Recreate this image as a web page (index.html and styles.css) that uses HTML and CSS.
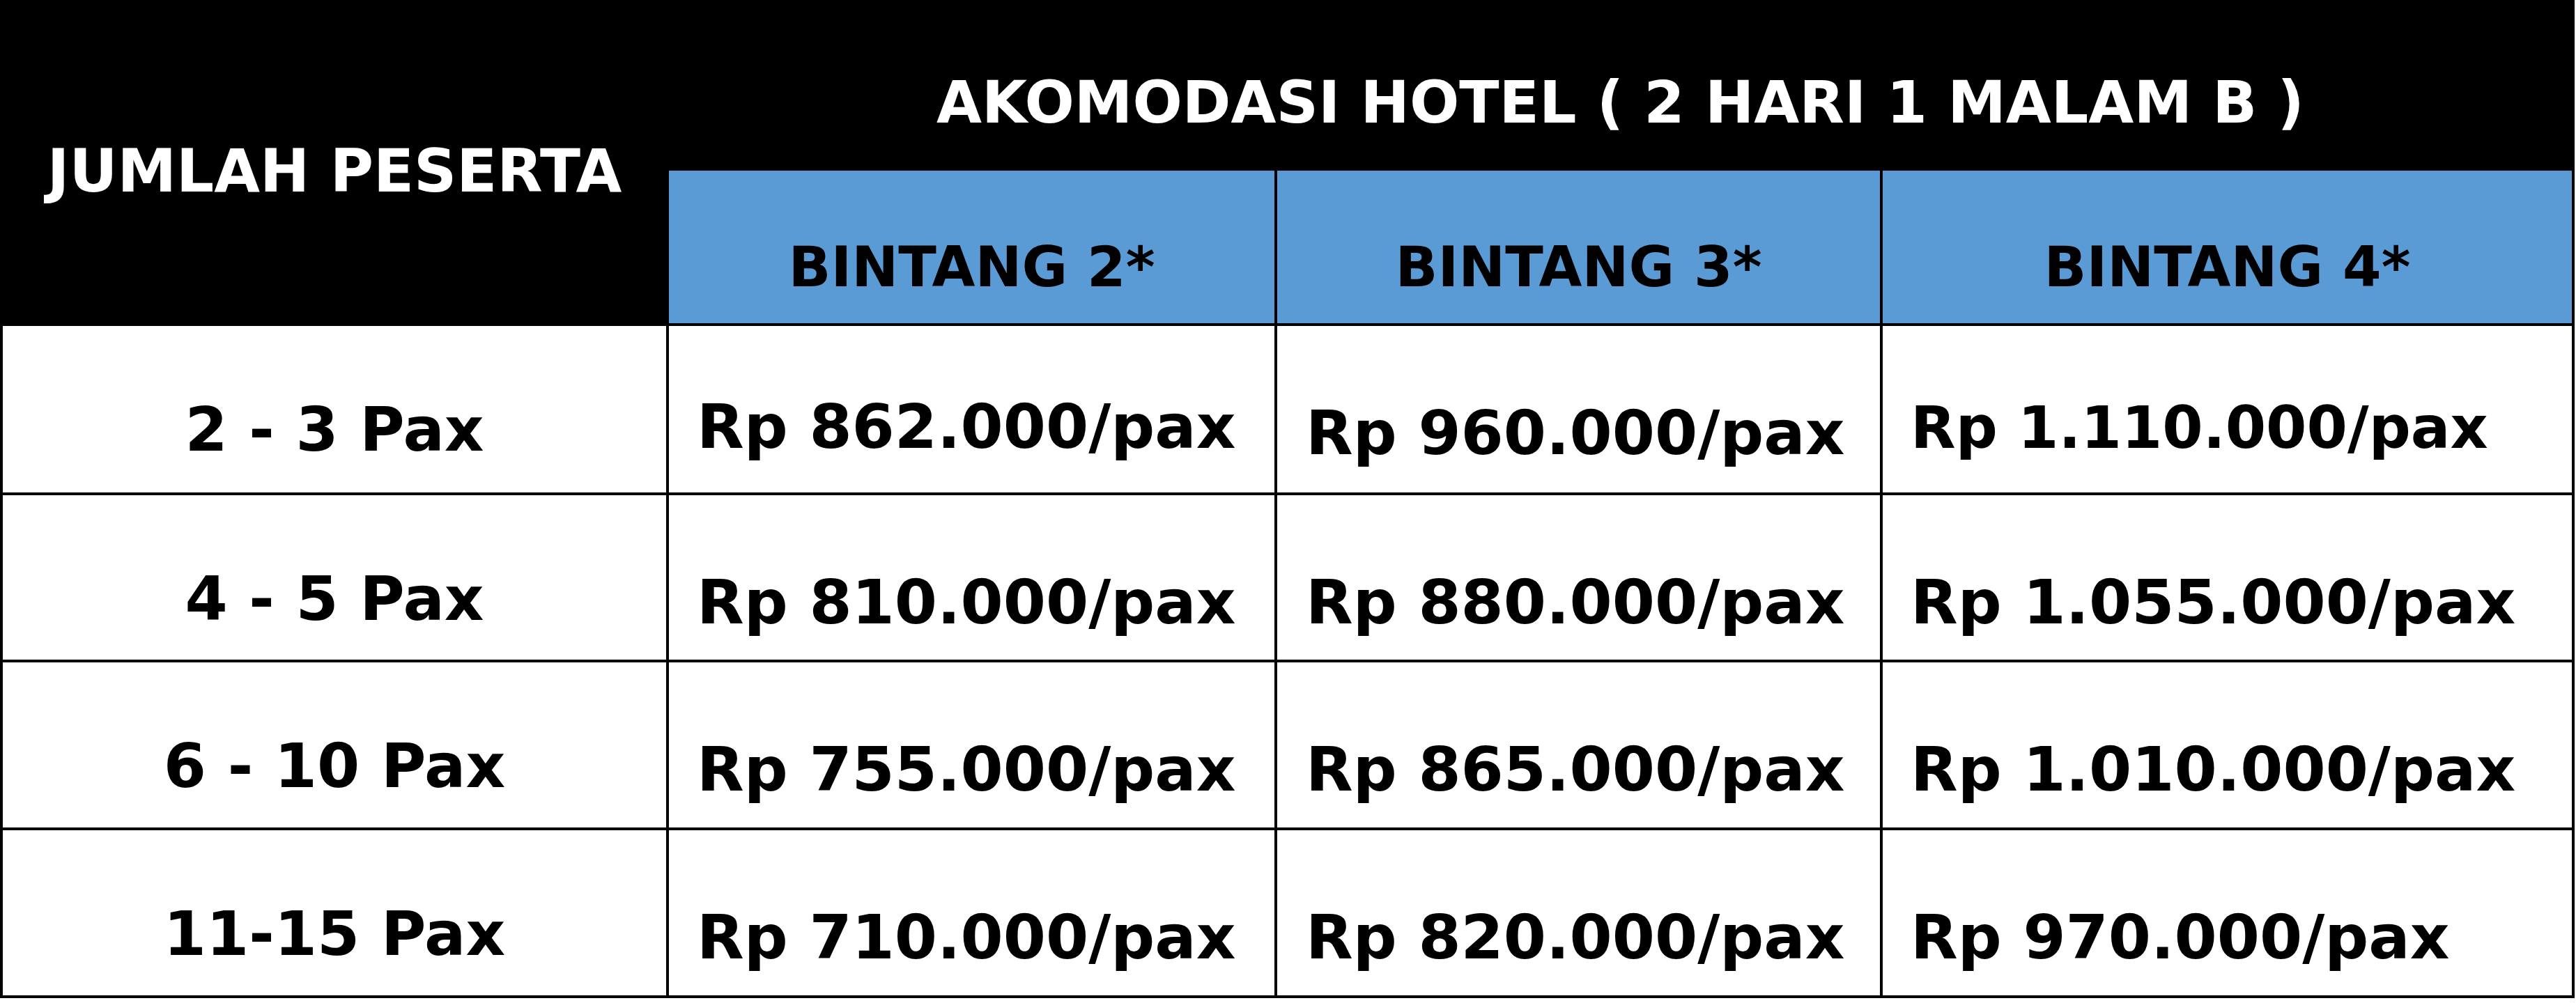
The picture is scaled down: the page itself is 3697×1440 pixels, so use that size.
FILE: index.html
```html
<!DOCTYPE html>
<html lang="id">
<head>
<meta charset="utf-8">
<title>Akomodasi Hotel</title>
<link rel="stylesheet" href="styles.css">
</head>
<body>
<div class="sheet">
  <div class="cell head-main">JUMLAH PESERTA</div>
  <div class="cell head-top">AKOMODASI HOTEL ( 2 HARI 1 MALAM B )</div>
  <div class="cell star">BINTANG 2*</div>
  <div class="cell star">BINTANG 3*</div>
  <div class="cell star">BINTANG 4*</div>

  <div class="cell pax">2 - 3 Pax</div>
  <div class="cell price c2 raised">Rp 862.000/pax</div>
  <div class="cell price c3">Rp 960.000/pax</div>
  <div class="cell price c4 small">Rp 1.110.000/pax</div>

  <div class="cell pax">4 - 5 Pax</div>
  <div class="cell price c2">Rp 810.000/pax</div>
  <div class="cell price c3">Rp 880.000/pax</div>
  <div class="cell price c4">Rp 1.055.000/pax</div>

  <div class="cell pax">6 - 10 Pax</div>
  <div class="cell price c2">Rp 755.000/pax</div>
  <div class="cell price c3">Rp 865.000/pax</div>
  <div class="cell price c4">Rp 1.010.000/pax</div>

  <div class="cell pax">11-15 Pax</div>
  <div class="cell price c2">Rp 710.000/pax</div>
  <div class="cell price c3">Rp 820.000/pax</div>
  <div class="cell price c4">Rp 970.000/pax</div>
</div>
</body>
</html>
```
FILE: styles.css
```css
html, body {
  margin: 0;
  padding: 0;
  background: #ffffff;
}

.sheet {
  display: grid;
  grid-template-columns: 952px 869px 865px 989px;
  grid-template-rows: 237px 219px 239px 236px 237px 237px;
  gap: 4px;
  padding: 4px;
  background: #000000;
  width: max-content;
}

.cell {
  box-sizing: border-box;
  display: flex;
  align-items: flex-start;
  font-family: "DejaVu Sans", "Liberation Sans", sans-serif;
  font-weight: 700;
  line-height: 1;
  white-space: nowrap;
  overflow: hidden;
}

.head-main {
  grid-column: 1;
  grid-row: 1 / span 2;
  background: #000000;
  color: #ffffff;
  justify-content: center;
  font-size: 85px;
  padding-top: 199px;
}

.head-top {
  grid-column: 2 / span 3;
  background: #000000;
  color: #ffffff;
  justify-content: center;
  font-size: 84px;
  padding-top: 101px;
}

.star {
  background: #5b9bd5;
  color: #000000;
  justify-content: center;
  font-size: 80px;
  padding-top: 99px;
}

.pax {
  background: #ffffff;
  color: #000000;
  justify-content: center;
  font-size: 88px;
  padding-top: 105px;
}

.price {
  background: #ffffff;
  color: #000000;
  font-size: 88px;
  padding-top: 110px;
  padding-left: 40px;
}

.price.c3 {
  padding-left: 41px;
}

.price.raised {
  padding-top: 101px;
}

.price.small {
  font-size: 84px;
  padding-top: 104px;
}
```
